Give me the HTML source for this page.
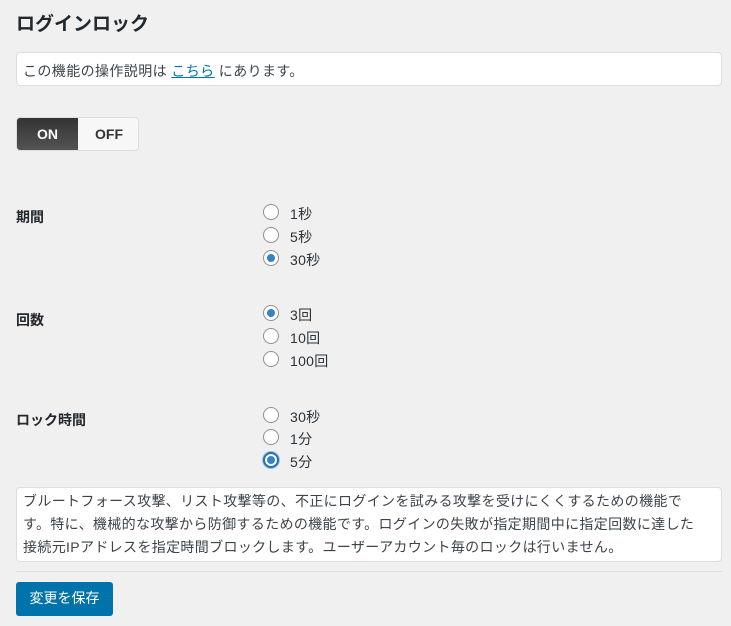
<!DOCTYPE html>
<html><head><meta charset="utf-8"><style>
body{margin:0;width:731px;height:626px;background:#f0f0f0;font-family:"Liberation Sans","Noto Sans CJK JP",sans-serif;color:#23282d;position:relative;overflow:hidden;font-size:14px}
.a{position:absolute;white-space:nowrap}
h1{position:absolute;left:16px;top:9px;margin:0;font-size:19px;font-weight:bold;color:#23282d}
.box{position:absolute;left:16px;width:706px;background:#fff;border:1px solid #ddd;border-radius:4px;box-sizing:border-box}
.lbl{position:absolute;left:16px;font-weight:bold;font-size:14px}
.r{position:absolute;left:263px;width:16px;height:16px;border:1px solid #8c8f94;border-radius:50%;background:#fff;box-sizing:border-box}
.r.c::after{content:"";position:absolute;left:3px;top:3px;width:8px;height:8px;border-radius:50%;background:#3582c4}
.r.f{border:2px solid #2271b1;box-shadow:0 0 0 1px #9ec2e6}
.r.f::after{left:2px;top:2px}
.t{position:absolute;left:290px;font-size:14px;color:#2c3338;letter-spacing:0.3px}
</style></head><body>
<h1>ログインロック</h1>
<div class="box" style="top:52px;height:34px;padding:8px 6px;color:#3c434a;letter-spacing:0.4px">この機能の操作説明は <span style="color:#0073aa;text-decoration:underline">こちら</span> にあります。</div>
<div class="a" style="left:16px;top:117px;width:123px;height:34px;border:1px solid #ddd;border-radius:4px;background:#f7f7f7;box-sizing:border-box;overflow:hidden">
<div style="position:absolute;left:0;top:0;width:61px;height:34px;background:linear-gradient(#333,#555);color:#fff;font-weight:bold;text-align:center;line-height:32px">ON</div>
<div style="position:absolute;left:61px;top:0;width:62px;height:34px;color:#333;font-weight:bold;text-align:center;line-height:32px">OFF</div>
</div>
<div class="lbl" style="top:207px">期間</div>
<div class="lbl" style="top:310px">回数</div>
<div class="lbl" style="top:410px">ロック時間</div>
<div class="r" style="top:204px"></div><div class="t" style="top:204px">1秒</div>
<div class="r" style="top:227px"></div><div class="t" style="top:227px">5秒</div>
<div class="r c" style="top:250px"></div><div class="t" style="top:250px">30秒</div>
<div class="r c" style="top:305px"></div><div class="t" style="top:305px">3回</div>
<div class="r" style="top:328px"></div><div class="t" style="top:328px">10回</div>
<div class="r" style="top:351px"></div><div class="t" style="top:351px">100回</div>
<div class="r" style="top:407px"></div><div class="t" style="top:407px">30秒</div>
<div class="r" style="top:429px"></div><div class="t" style="top:429px">1分</div>
<div class="r c f" style="top:452px"></div><div class="t" style="top:452px">5分</div>
<div class="box" style="top:487px;height:75px;padding:2px 6px;line-height:23px;color:#3c434a;white-space:nowrap;letter-spacing:0.35px">ブルートフォース攻撃、リスト攻撃等の、不正にログインを試みる攻撃を受けにくくするための機能で<br>す。特に、機械的な攻撃から防御するための機能です。ログインの失敗が指定期間中に指定回数に達した<br>接続元IPアドレスを指定時間ブロックします。ユーザーアカウント毎のロックは行いません。</div>
<div class="a" style="left:16px;top:571px;width:706px;height:1px;background:#ddd"></div>
<div class="a" style="left:16px;top:582px;width:97px;height:34px;background:#0073aa;border-radius:3px;color:#fff;text-align:center;line-height:33px">変更を保存</div>
</body></html>
